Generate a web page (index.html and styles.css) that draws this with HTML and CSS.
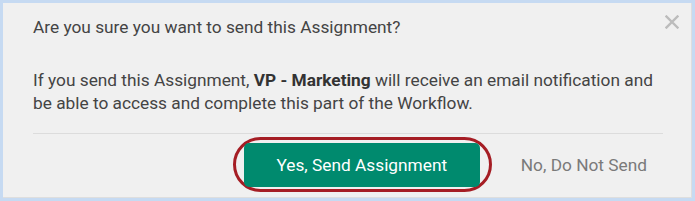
FILE: index.html
```html
<!DOCTYPE html>
<html>
<head>
<meta charset="utf-8">
<link rel="stylesheet" href="styles.css">
</head>
<body>
<div class="modal">
  <button class="close" aria-label="Close">
    <svg width="14" height="14" viewBox="0 0 14 14"><path d="M1.5 1.5 L12.5 12.5 M12.5 1.5 L1.5 12.5" stroke="#bcbcbc" stroke-width="2.4" stroke-linecap="square"/></svg>
  </button>
  <div class="body">
    <p class="q">Are you sure you want to send this Assignment?</p>
    <p class="info">If you send this Assignment, <b>VP - Marketing</b> will receive an email notification and be able to access and complete this part of the Workflow.</p>
  </div>
  <div class="footer">
    <div class="highlight">
      <button class="primary">Yes, Send Assignment</button>
    </div>
    <button class="link">No, Do Not Send</button>
  </div>
</div>
</body>
</html>
```

FILE: styles.css
```css
html, body {
  margin: 0;
  padding: 0;
}
body {
  background: #c6daf2;
  padding: 3px;
  width: 695px;
  height: 201px;
  box-sizing: border-box;
  font-family: Roboto, "Liberation Sans", sans-serif;
}
.modal {
  position: relative;
  background: #f0f0f0;
  height: 195px;
  box-sizing: border-box;
  border-right: 1px solid #dedede;
  border-bottom: 1px solid #dedede;
  padding: 0 28px 0 30px;
}
.close {
  position: absolute;
  top: 12px;
  right: 12px;
  border: 0;
  background: none;
  padding: 0;
  width: 14px;
  height: 14px;
  line-height: 0;
}
.body {
  padding-top: 13px;
  padding-bottom: 18px;
  border-bottom: 1px solid #dcdcdc;
  color: #444;
  font-size: 17.3px;
  line-height: 23px;
}
.body p {
  margin: 0;
}
.body .q {
  margin-bottom: 30px;
}
.body b {
  font-weight: 700;
  color: #333;
}
.footer {
  display: flex;
  justify-content: flex-end;
  align-items: center;
  padding-top: 3px;
  gap: 29px;
  padding-right: 16px;
}
.highlight {
  border: 3px solid #a51d24;
  border-radius: 28px;
  padding: 3px 9px 2px 8px;
}
.primary {
  display: block;
  width: 236px;
  height: 44px;
  border: 0;
  border-radius: 5px;
  background: #008a6e;
  color: #fff;
  font-family: inherit;
  font-size: 17.3px;
}
.link {
  border: 0;
  background: none;
  padding: 0;
  color: #7a7a7a;
  font-family: inherit;
  font-size: 17.3px;
}
```
